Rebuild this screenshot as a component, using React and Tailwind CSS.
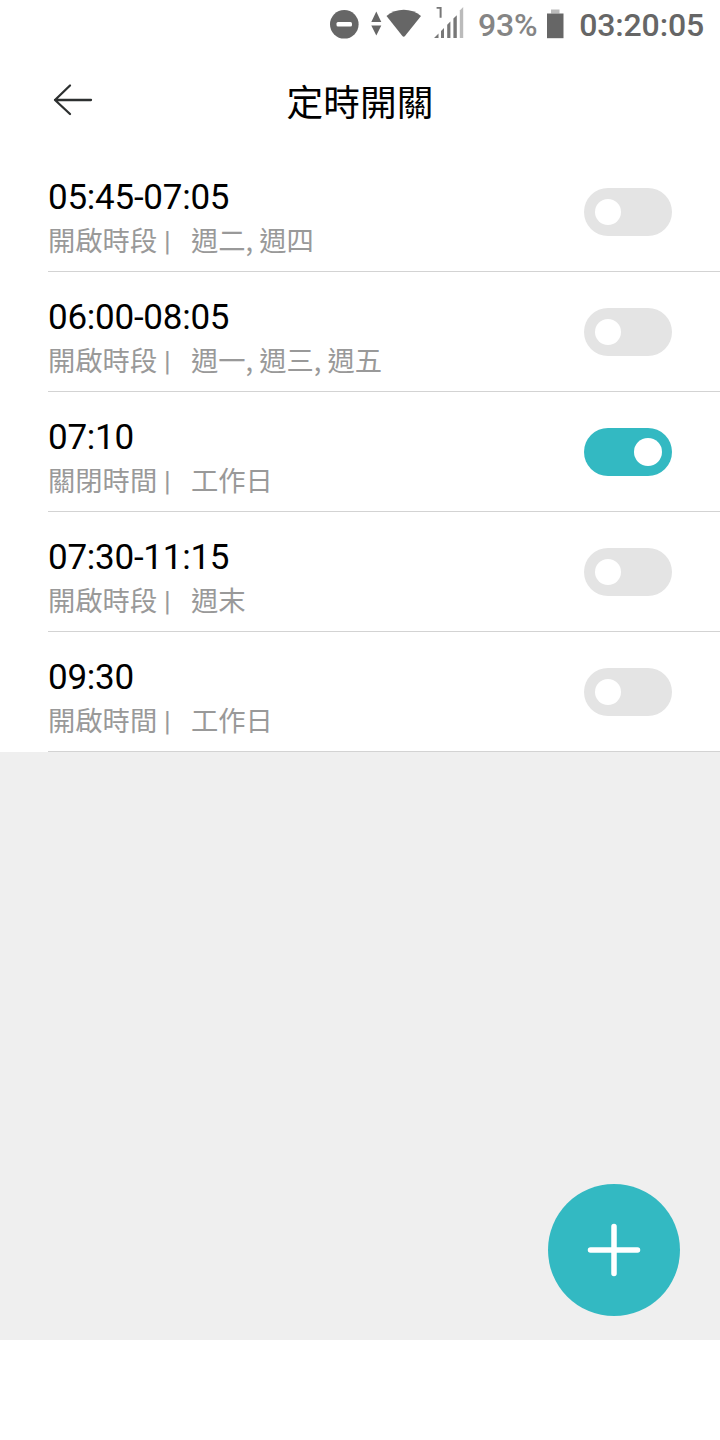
import React, { useState } from 'react';
import clsx from 'clsx';

const INITIAL_TIMERS = [
  { id: 1, time: '05:45-07:05', label: '開啟時段', days: '週二, 週四', enabled: false },
  { id: 2, time: '06:00-08:05', label: '開啟時段', days: '週一, 週三, 週五', enabled: false },
  { id: 3, time: '07:10', label: '關閉時間', days: '工作日', enabled: true },
  { id: 4, time: '07:30-11:15', label: '開啟時段', days: '週末', enabled: false },
  { id: 5, time: '09:30', label: '開啟時間', days: '工作日', enabled: false },
];

function StatusBar() {
  return (
    <div className="flex h-12 items-center justify-end pr-4 font-medium text-[#666]">
      <svg className="h-12 w-[136px] shrink-0" viewBox="328 0 136 48" fill="#666">
        {/* Do not disturb */}
        <circle cx="344.3" cy="24.3" r="14.3" />
        <rect x="336.5" y="22" width="15.5" height="4.6" rx="1.5" fill="#fff" />
        {/* Data activity */}
        <path d="M376.3 11.5l5 10.5h-10zM376.3 35.5l5-10h-10z" />
        {/* Wifi */}
        <path d="M386.5 16C396 7.5 411.5 7.5 421 16L405.2 35.8Q403.7 37.6 402.2 35.8z" />
        {/* Mobile signal */}
        <path d="M436.6 7H441.6V17.8H439.6V8.8H436.6z" fill="#777" />
        <path
          d="M434 38L438.5 33.5V38zM441 31L444 28V38H441zM447.2 24.8L450.4 21.6V38H447.2zM453.4 18.6L456.8 15.2V38H453.4z"
          fill="#777"
        />
        <path d="M459.8 10.5L463.2 7V38H459.8z" fill="#bbb" />
      </svg>
      <span className="ml-[14px] pt-[3px] text-[32px] leading-[45px] tracking-[-0.25px] text-[#858585]">93%</span>
      <svg className="ml-2 h-12 w-5 shrink-0" viewBox="545 0 20 48">
        <path d="M551 9.5h8.5v4h-8.5z" fill="#bbb" />
        <path d="M547 13.5h16.5v24.7h-16.5z" fill="#666" />
      </svg>
      <span className="ml-[14px] pt-[3px] text-[32px] leading-[45px] tracking-[-0.15px]">03:20:05</span>
    </div>
  );
}

function Header() {
  return (
    <header className="grid h-[104px] grid-cols-[120px_1fr_120px] items-center">
      <button type="button" aria-label="返回" className="ml-12 flex size-12 items-center">
        <svg className="size-12" viewBox="48 76 48 48" fill="none" stroke="#2d3030" strokeWidth="2.3" strokeLinecap="round" strokeLinejoin="round">
          <path d="M91 100H55M70 85.5L55 100l15 14" />
        </svg>
      </button>
      <h1 className="pt-[7px] text-center text-[36.7px] leading-[48px] text-black">定時開關</h1>
    </header>
  );
}

function Toggle({ checked, onChange }) {
  return (
    <button
      type="button"
      role="switch"
      aria-checked={checked}
      onClick={onChange}
      className={clsx(
        'flex h-12 w-[88px] shrink-0 items-center rounded-full',
        checked ? 'justify-end bg-[#33b9c2] pr-2.5' : 'justify-start bg-[#e4e4e4] pl-[11px]'
      )}
    >
      <span className={clsx('rounded-full bg-white', checked ? 'size-7' : 'size-[26px]')} />
    </button>
  );
}

function TimerRow({ timer, onToggle }) {
  return (
    <li className="ml-12 flex h-[120px] items-center justify-between border-b border-[#d3d3d3] pr-12">
      <div className="pt-[15px]">
        <div className="text-[35px] leading-[43px] tracking-[-0.25px] text-black">{timer.time}</div>
        <div className="text-[27.3px] leading-[40px] whitespace-pre text-[#999]">
          {timer.label} |   <span className="font-['Noto_Sans_CJK_TC',sans-serif]">{timer.days}</span>
        </div>
      </div>
      <Toggle checked={timer.enabled} onChange={onToggle} />
    </li>
  );
}

export default function App() {
  const [timers, setTimers] = useState(INITIAL_TIMERS);

  const toggle = (id) => {
    setTimers((prev) => prev.map((t) => (t.id === id ? { ...t, enabled: !t.enabled } : t)));
  };

  return (
    <div className="flex h-[1440px] w-[720px] flex-col overflow-hidden bg-white font-[Roboto,'Noto_Sans_CJK_TC',sans-serif]">
      <StatusBar />
      <Header />
      <main className="flex h-[1188px] flex-col bg-[#efefef]">
        <ul className="bg-white">
          {timers.map((timer) => (
            <TimerRow key={timer.id} timer={timer} onToggle={() => toggle(timer.id)} />
          ))}
        </ul>
        <button
          type="button"
          aria-label="新增"
          className="mt-auto mr-10 mb-6 flex size-[132px] items-center justify-center self-end rounded-full bg-[#33b9c2]"
        >
          <svg className="size-14" viewBox="0 0 56 56" stroke="#fff" strokeWidth="5.5" strokeLinecap="round">
            <path d="M28 4.5v47M4.5 28h47" />
          </svg>
        </button>
      </main>
    </div>
  );
}
